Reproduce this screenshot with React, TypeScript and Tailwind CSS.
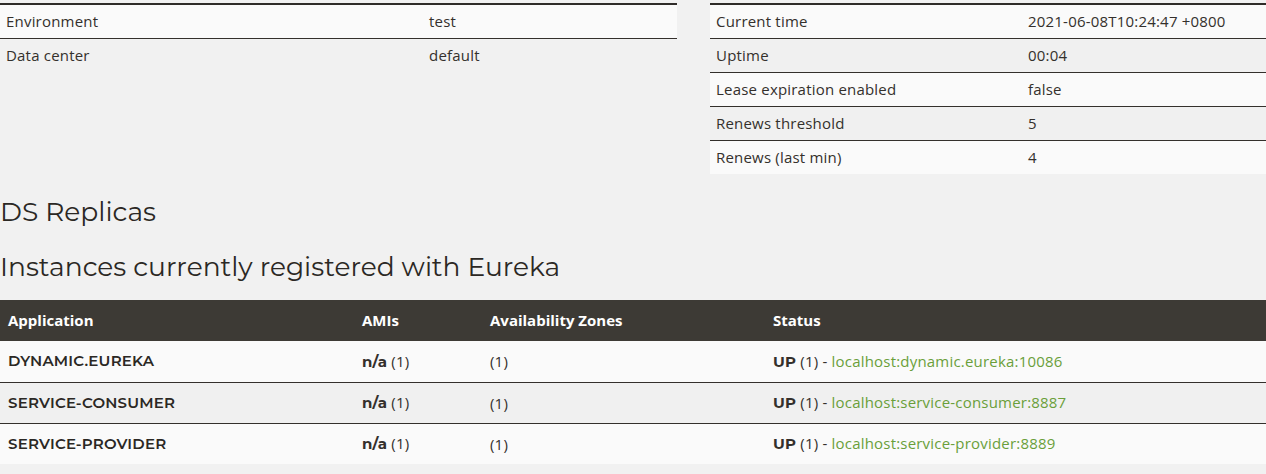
import React from "react";

const leftRows = [
  ["Environment", "test"],
  ["Data center", "default"],
];

const rightRows = [
  ["Current time", "2021-06-08T10:24:47 +0800"],
  ["Uptime", "00:04"],
  ["Lease expiration enabled", "false"],
  ["Renews threshold", "5"],
  ["Renews (last min)", "4"],
];

const instances = [
  { app: "DYNAMIC.EUREKA", link: "localhost:dynamic.eureka:10086" },
  { app: "SERVICE-CONSUMER", link: "localhost:service-consumer:8887" },
  { app: "SERVICE-PROVIDER", link: "localhost:service-provider:8889" },
];

const body = "font-['Open_Sans','Liberation_Sans',sans-serif]";
const head = "font-['Montserrat','Lato','Liberation_Sans',sans-serif]";

const InfoTable: React.FC<{ rows: string[][]; keyWidth: string; striped?: boolean }> = ({
  rows,
  keyWidth,
  striped,
}) => (
  <div className="border-t-2 border-[#2f2c29]">
    {rows.map(([k, v], i) => (
      <div
        key={k}
        className={
          "flex items-center text-[15px] tracking-[0.2px] text-[#34302c] " +
          (i > 0 ? "h-[34px] border-t border-[#34302c] " : "h-[33px] ") +
          (i % 2 === 0 ? "bg-[#fafafa]" : striped ? "bg-[#f0f0f0]" : "")
        }
      >
        <div className={"shrink-0 px-[6px] " + keyWidth}>{k}</div>
        <div className="px-[6px]">{v}</div>
      </div>
    ))}
  </div>
);

export default function App() {
  return (
    <div className={"min-h-[474px] w-[1266px] overflow-hidden bg-[#f1f1f1] pt-[3px] " + body}>
      {/* ── General info ── */}
      <div className="flex items-start gap-[33px]">
        <div className="w-[677px]">
          <InfoTable rows={leftRows} keyWidth="w-[423px]" />
        </div>
        <div className="w-[556px]">
          <InfoTable rows={rightRows} keyWidth="w-[312px]" striped />
        </div>
      </div>

      {/* ── Headings ── */}
      <h2 className={"mt-[23px] text-[26.5px] leading-[30px] text-[#2b2824] " + head}>DS Replicas</h2>
      <h2 className={"mt-[24px] text-[26.5px] leading-[32px] text-[#2b2824] " + head}>
        Instances currently registered with Eureka
      </h2>

      {/* ── Instances ── */}
      <div className="mt-[17px]">
        <div className="flex h-[41px] items-center bg-[#3d3a35] text-[15px] font-bold text-white">
          <div className="w-[354px] px-2">Application</div>
          <div className="w-[128px] px-2">AMIs</div>
          <div className="w-[283px] px-2">Availability Zones</div>
          <div className="px-2">Status</div>
        </div>
        {instances.map((r, i) => (
          <div
            key={r.app}
            className={
              "flex h-[41px] items-center text-[15px] tracking-[0.2px] text-[#34302c] " +
              (i > 0 ? "border-t border-[#34302c] " : "") +
              (i % 2 === 0 ? "bg-[#fafafa]" : "bg-[#f0f0f0]")
            }
          >
            <div className={"w-[354px] px-2 font-semibold text-[#2b2824] " + head}>{r.app}</div>
            <div className="w-[128px] px-2">
              <b className={head}>n/a</b> (1)
            </div>
            <div className="w-[283px] px-2">(1)</div>
            <div className="px-2">
              <b className={head}>UP</b> (1) - <span className="text-[#6a9f3a]">{r.link}</span>
            </div>
          </div>
        ))}
      </div>
    </div>
  );
}
